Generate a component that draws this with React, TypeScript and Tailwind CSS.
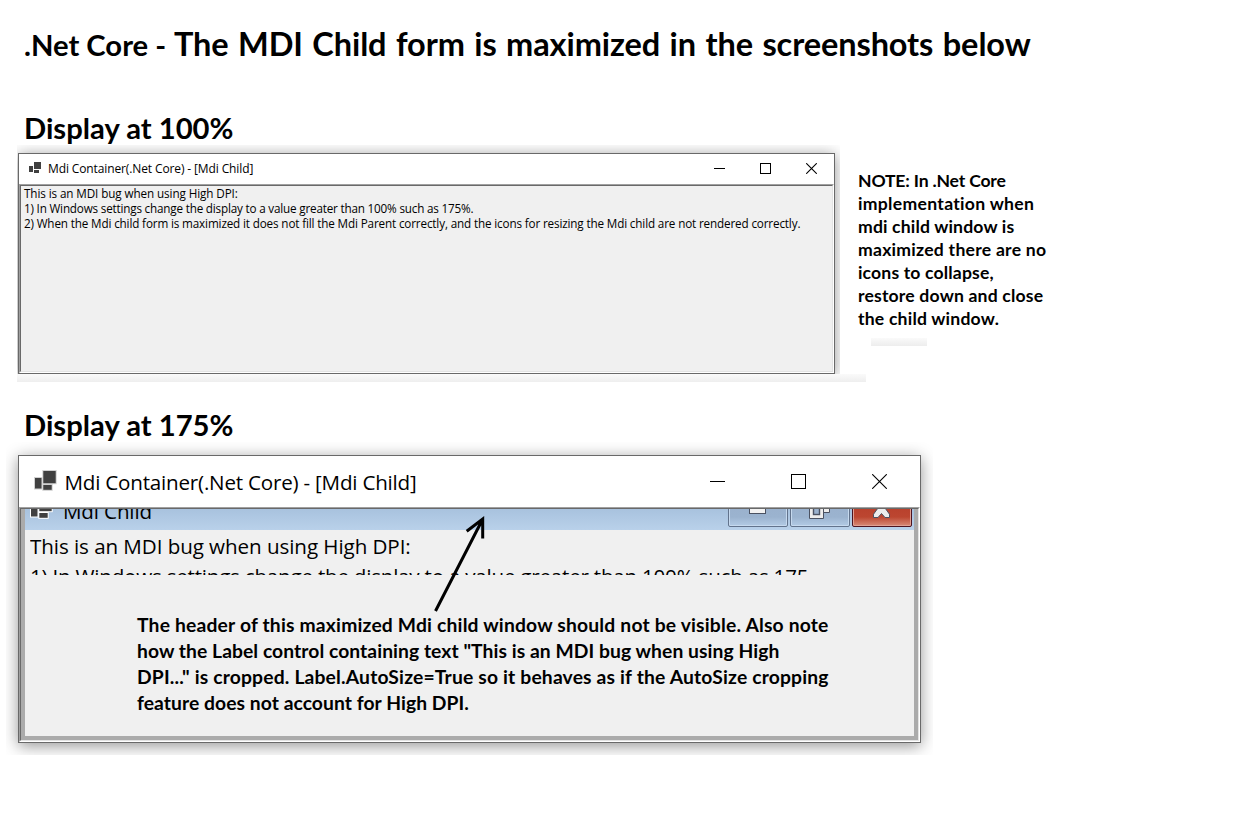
import type { ReactNode } from "react";

const HEADING = "font-['Lato','Liberation_Sans',sans-serif] font-bold text-black whitespace-nowrap [font-variant-ligatures:none]";
const UI = "font-['Open_Sans','Noto_Sans',sans-serif] text-black whitespace-nowrap";

function AppIcon({ className, outline }: { className: string; outline: string }) {
  return (
    <svg viewBox="0 0 23 21" className={className}>
      <g fill="#404040" stroke={outline} strokeWidth="2" paintOrder="stroke">
        <rect x="1" y="8" width="6.5" height="10.5" />
        <rect x="9.3" y="1" width="12.4" height="12.2" />
        <rect x="9.3" y="15" width="8.4" height="4.8" />
      </g>
    </svg>
  );
}

function SmallAppIcon() {
  return (
    <svg viewBox="0 0 13 12" className="-mt-[2px] h-3 w-[13px] shrink-0" shapeRendering="crispEdges">
      <g fill="#404040">
        <rect x="1" y="4" width="4" height="6" />
        <rect x="6" y="0" width="7" height="7" />
        <rect x="6" y="8" width="5" height="3" />
      </g>
    </svg>
  );
}

function CaptionButtons({ size, className }: { size: number; className: string }) {
  const s = size;
  return (
    <div className={className}>
      <svg width={s} height={s}>
        <path d={`M0 ${Math.floor(s / 2) + 0.5}H${s}`} stroke="#000" />
      </svg>
      <svg width={s} height={s}>
        <rect x="0.5" y="0.5" width={s - 1} height={s - 1} fill="none" stroke="#000" />
      </svg>
      <svg width={s} height={s}>
        <path d={`M0.2 0.2L${s - 0.2} ${s - 0.2}M${s - 0.2} 0.2L0.2 ${s - 0.2}`} stroke="#000" strokeWidth="1.1" />
      </svg>
    </div>
  );
}

function ChildButton({ close, children }: { close?: boolean; children: ReactNode }) {
  const id = close ? "btn-close" : "btn-plain";
  return (
    <svg width="60" height="18" viewBox="0 0 60 18">
      <defs>
        <linearGradient id={id} x1="0" y1="0" x2="0" y2="1">
          <stop offset="0" stopColor={close ? "#b8402c" : "#9ab1cd"} />
          <stop offset="0.6" stopColor={close ? "#bc4630" : "#9bb3cf"} />
          <stop offset="1" stopColor={close ? "#d4826f" : "#b0c8e2"} />
        </linearGradient>
      </defs>
      <rect x="0.5" y="-5.5" width="59" height="23" rx="1.5" fill={close ? "#e0a093" : "#c6d9ee"} stroke={close ? "#4c1420" : "#62738c"} />
      <rect x="2" y="-4" width="56" height="20" fill={`url(#${id})`} />
      {children}
    </svg>
  );
}

function ContainerWindowSmall() {
  return (
    <div className="h-[229px] w-[823px] overflow-hidden pl-px pt-2">
      <div className="h-[221px] w-[817px] border border-[#696969] bg-white shadow-[0_2px_14px_rgba(0,0,0,0.42)]">
        <div className="flex h-[30px] items-center pl-[9px] pr-[17px]">
          <SmallAppIcon />
          <span className={`${UI} ml-[7px] text-[12px] leading-[20px] tracking-[-0.12px]`}>Mdi Container(.Net Core) - [Mdi Child]</span>
          <CaptionButtons size={11} className="-mt-[2px] ml-auto flex gap-[35px]" />
        </div>
        <div className="h-[189px] border border-b-white border-l-[#a0a0a0] border-r-white border-t-[#a0a0a0]">
          <div className="h-full border border-b-[#e3e3e3] border-l-[#696969] border-r-[#e3e3e3] border-t-[#696969] bg-[#f0f0f0] pl-[3px]">
            <div className={`${UI} text-[11.7px] leading-[15px]`}>
              <p className="tracking-[-0.1px]">This is an MDI bug when using High DPI:</p>
              <p className="tracking-[-0.187px]">1) In Windows settings change the display to a value greater than 100% such as 175%.</p>
              <p className="tracking-[-0.146px]">2) When the Mdi child form is maximized it does not fill the Mdi Parent correctly, and the icons for resizing the Mdi child are not rendered correctly.</p>
            </div>
          </div>
        </div>
      </div>
    </div>
  );
}

function ChildTitleBar() {
  return (
    <div className="flex h-[21px] items-end overflow-hidden bg-gradient-to-b from-[#a8c2de] to-[#b9d1ea] pl-[5px] pr-[2px]">
      <AppIcon className="mb-[11px] h-[21px] w-[23px] shrink-0" outline="#ffffff" />
      <span className={`${UI} mb-[4px] ml-[10px] text-[20.6px] leading-[29px] tracking-[-0.15px]`}>Mdi Child</span>
      <div className="mb-[3px] ml-auto flex gap-[2px]">
        <ChildButton>
          <rect x="21.5" y="-4" width="16" height="8.5" fill="#f2f2f2" stroke="#4b5262" />
        </ChildButton>
        <ChildButton>
          <path d="M24.500 -4H39.500V3.500H33.500V9.500H19.500V-1Z" fill="#ededed" stroke="#4b5262" />
          <path d="M33.500 -1V4" stroke="#4b5262" />
          <rect x="23.500" y="-1" width="6" height="6.500" fill="#9ab1cd" stroke="#4b5262" strokeWidth="1.4" />
        </ChildButton>
        <ChildButton close>
          <path d="M26 -1L21.500 5.200V8.500H26L29.500 4.500L33 8.500H37.500V5.200L33 -1Z" fill="#ececec" stroke="#4b5262" />
        </ChildButton>
      </div>
    </div>
  );
}

function ContainerWindowLarge() {
  return (
    <div className="ml-[6px] h-[313px] w-[927px] overflow-hidden pl-3 pt-[13px]">
      <div className="h-[288px] w-[903px] border border-[#696969] bg-white shadow-[0_3px_15px_rgba(0,0,0,0.42)]">
        <div className="flex h-[51px] items-center pl-[15px] pr-[33px]">
          <AppIcon className="-mt-[2px] h-[21px] w-[23px] shrink-0" outline="#d0d0d0" />
          <span className={`${UI} ml-[7.500px] mt-[2px] text-[20.6px] leading-[29px] tracking-[-0.21px]`}>Mdi Container(.Net Core) - [Mdi Child]</span>
          <CaptionButtons size={15} className="ml-auto flex gap-[66px]" />
        </div>
        <div className="h-[235px] border border-b-white border-l-[#a0a0a0] border-r-white border-t-[#a0a0a0]">
          <div className="h-full border border-b-[#e3e3e3] border-l-[#696969] border-r-[#e3e3e3] border-t-[#696969] bg-[#ababab] px-1 pb-1">
            <div className="h-full bg-[#f0f0f0]">
              <ChildTitleBar />
              <div className={`${UI} ml-[5px] h-[45px] w-[778px] overflow-hidden pt-px text-[20.6px] leading-[30px]`}>
                <p className="tracking-[-0.07px]">This is an MDI bug when using High DPI:</p>
                <p className="tracking-[-0.23px]">1) In Windows settings change the display to a value greater than 100% such as 175%.</p>
              </div>
              <div className={`${HEADING} ml-[112px] mt-[37px] text-[19.300px] leading-[26px]`}>
                <p className="tracking-[0.18px]">The header of this maximized Mdi child window should not be visible. Also note</p>
                <p className="tracking-[0.06px]">how the Label control containing text "This is an MDI bug when using High</p>
                <p className="tracking-[0.165px]">DPI..." is cropped. Label.AutoSize=True so it behaves as if the AutoSize cropping</p>
                <p className="tracking-[0.06px]">feature does not account for High DPI.</p>
              </div>
            </div>
          </div>
        </div>
      </div>
    </div>
  );
}

export default function App() {
  return (
    <main className="relative h-[814px] w-[1259px] overflow-hidden bg-white">
      <h1 className={`${HEADING} flex h-16 items-baseline pl-6 pt-6 leading-[40px]`}>
        <span className="w-[150px] text-[29.200px]">.Net Core -</span>
        <span className="text-[32.500px] tracking-[-0.1px] [word-spacing:1.7px]">The MDI Child form is maximized in the screenshots below</span>
      </h1>
      <h2 className={`${HEADING} ml-6 mt-[47px] h-[34px] text-[29.200px] leading-[34px]`}>Display at 100%</h2>
      <section className="ml-[17px] flex">
        <ContainerWindowSmall />
        <div className="ml-[18px] pt-6">
          <div className={`${HEADING} text-[17.600px] leading-[23px]`}>
            <p className="tracking-[-0.18px]">NOTE: In .Net Core</p>
            <p className="tracking-[0.3px]">implementation when</p>
            <p className="tracking-[0.16px]">mdi child window is</p>
            <p className="tracking-[0.25px]">maximized there are no</p>
            <p className="tracking-[0.15px]">icons to collapse,</p>
            <p className="tracking-[0.17px]">restore down and close</p>
            <p className="tracking-[0.2px]">the child window.</p>
          </div>
          <div className="ml-[13px] mt-2 h-2 w-14 bg-gradient-to-b from-[#fafafa] to-[#ededed]" />
        </div>
      </section>
      <div className="ml-[17px] h-2 w-[849px] bg-gradient-to-b from-[#fafafa] to-[#eeeeee]" />
      <h2 className={`${HEADING} ml-6 mt-[26px] h-[34px] text-[29.200px] leading-[34px]`}>Display at 175%</h2>
      <ContainerWindowLarge />
      <svg className="absolute left-[425px] top-[505px] h-[110px] w-[70px]" viewBox="425 505 70 110">
        <path d="M435.500 611L482.500 519.500M466.700 531.300L482.700 519V538.500" fill="none" stroke="#000" strokeWidth="3" />
      </svg>
    </main>
  );
}
